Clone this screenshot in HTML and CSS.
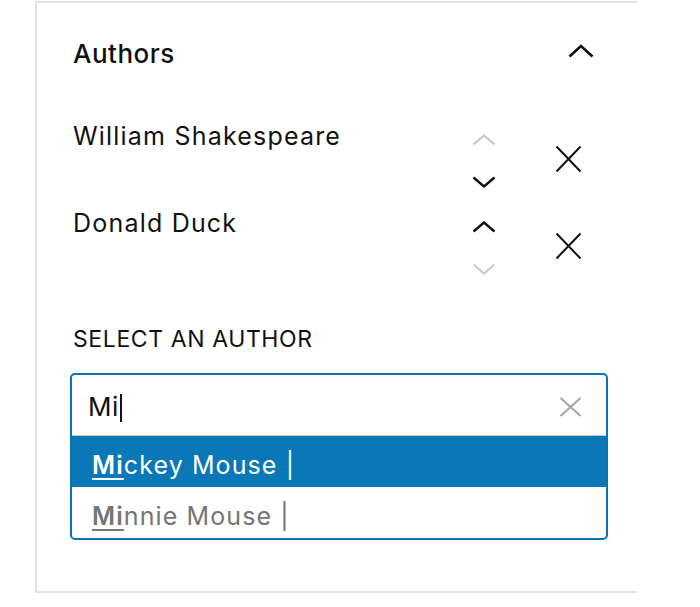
FILE: index.html
```html
<!DOCTYPE html>
<html lang="en">
<head>
<meta charset="utf-8">
<title>Authors</title>
<link rel="stylesheet" href="styles.css">
</head>
<body>
<div class="panel">
  <div class="panel-header">
    <h2 class="panel-title">Authors</h2>
    <button class="toggle" aria-label="Collapse">
      <svg width="26" height="14" viewBox="0 0 26 14"><polyline points="1.5,12.5 13,2 24.5,12.5" fill="none" stroke="#111" stroke-width="2.6"/></svg>
    </button>
  </div>

  <ul class="authors">
    <li class="author">
      <span class="author-name">William Shakespeare</span>
      <div class="movers">
        <button class="mover disabled" aria-label="Move up">
          <svg width="24" height="12" viewBox="0 0 24 12"><polyline points="1.5,10.5 12,1.5 22.5,10.5" fill="none" stroke="currentColor" stroke-width="2.2"/></svg>
        </button>
        <button class="mover" aria-label="Move down">
          <svg width="24" height="12" viewBox="0 0 24 12"><polyline points="1.5,1.5 12,10.5 22.5,1.5" fill="none" stroke="currentColor" stroke-width="2.4"/></svg>
        </button>
      </div>
      <button class="remove" aria-label="Remove">
        <svg width="27" height="28" viewBox="0 0 27 28"><path d="M1.5 1.5L25.5 26.5M25.5 1.5L1.5 26.5" fill="none" stroke="#111" stroke-width="2"/></svg>
      </button>
    </li>
    <li class="author">
      <span class="author-name">Donald Duck</span>
      <div class="movers">
        <button class="mover" aria-label="Move up">
          <svg width="24" height="12" viewBox="0 0 24 12"><polyline points="1.5,10.5 12,1.5 22.5,10.5" fill="none" stroke="currentColor" stroke-width="2.4"/></svg>
        </button>
        <button class="mover disabled" aria-label="Move down">
          <svg width="24" height="12" viewBox="0 0 24 12"><polyline points="1.5,1.5 12,10.5 22.5,1.5" fill="none" stroke="currentColor" stroke-width="2.2"/></svg>
        </button>
      </div>
      <button class="remove" aria-label="Remove">
        <svg width="27" height="28" viewBox="0 0 27 28"><path d="M1.5 1.5L25.5 26.5M25.5 1.5L1.5 26.5" fill="none" stroke="#111" stroke-width="2"/></svg>
      </button>
    </li>
  </ul>

  <div class="select-label">SELECT AN AUTHOR</div>

  <div class="combobox">
    <div class="combo-input">
      <span class="typed">Mi<span class="caret"></span></span>
      <button class="clear" aria-label="Clear">
        <svg width="23" height="20" viewBox="0 0 23 20"><path d="M1.5 1L21.5 19M21.5 1L1.5 19" fill="none" stroke="#a6a6a6" stroke-width="2"/></svg>
      </button>
    </div>
    <ul class="options">
      <li class="option active"><span class="match">Mi</span>ckey Mouse |</li>
      <li class="option"><span class="match">Mi</span>nnie Mouse |</li>
    </ul>
  </div>
</div>
</body>
</html>
```

FILE: styles.css
```css
* { box-sizing: border-box; }

html, body {
  margin: 0;
  padding: 0;
  background: #ffffff;
}

body {
  font-family: Inter, "Liberation Sans", sans-serif;
  color: #111111;
}

button {
  background: none;
  border: 0;
  padding: 0;
  margin: 0;
  cursor: pointer;
  color: inherit;
  display: flex;
  align-items: center;
  justify-content: center;
}

ul { list-style: none; margin: 0; padding: 0; }

.panel {
  margin: 1px 0 0 35px;
  width: 602px;
  height: 592px;
  border: 2px solid #e2e2e2;
  border-right: 0;
  padding: 35px 0 0 36px;
}

.panel-header {
  display: flex;
  align-items: flex-start;
  justify-content: space-between;
  padding-right: 43px;
  height: 32px;
}

.panel-title {
  margin: 0;
  font-size: 26px;
  line-height: 32px;
  font-weight: 500;
  letter-spacing: 0.5px;
}

.toggle {
  width: 26px;
  height: 26px;
}

.authors {
  margin-top: 51px;
}

.author {
  display: flex;
  align-items: flex-start;
  height: 87px;
  padding-right: 47px;
}

.author-name {
  flex: 1;
  font-size: 25px;
  line-height: 30px;
  letter-spacing: 1.2px;
}

.movers {
  width: 44px;
  display: flex;
  flex-direction: column;
  margin-top: -2px;
}

.mover {
  width: 44px;
  height: 42px;
  color: #111111;
}

.mover.disabled {
  color: #c8c8c8;
}

.remove {
  width: 44px;
  margin-left: 40px;
  padding-top: 24px;
  align-items: flex-start;
}

.select-label {
  margin-top: 30px;
  font-size: 23px;
  line-height: 28px;
  letter-spacing: 0.6px;
}

.combobox {
  margin: 20px 0 0 -3px;
  width: 538px;
  border: 2px solid #0a74b3;
  border-radius: 5px;
  overflow: hidden;
}

.combo-input {
  display: flex;
  align-items: center;
  justify-content: space-between;
  height: 61px;
  padding: 3px 24px 0 16px;
  border-bottom: 1px solid #c9c9c9;
  font-size: 26px;
  line-height: 56px;
  letter-spacing: 0.6px;
}

.caret {
  display: inline-block;
  width: 0;
  height: 28px;
  border-left: 2px solid #111111;
  vertical-align: -6px;
  margin-left: 1px;
}

.clear {
  width: 23px;
  height: 20px;
}

.option {
  height: 51px;
  padding: 7px 0 0 20px;
  font-size: 25px;
  line-height: 44px;
  letter-spacing: 1.1px;
  color: #757575;
}

.option.active {
  background: #0a77b7;
  color: #ffffff;
}

.match {
  font-weight: 600;
  text-decoration: underline;
  text-decoration-thickness: 2px;
  text-underline-offset: 4px;
}
```
